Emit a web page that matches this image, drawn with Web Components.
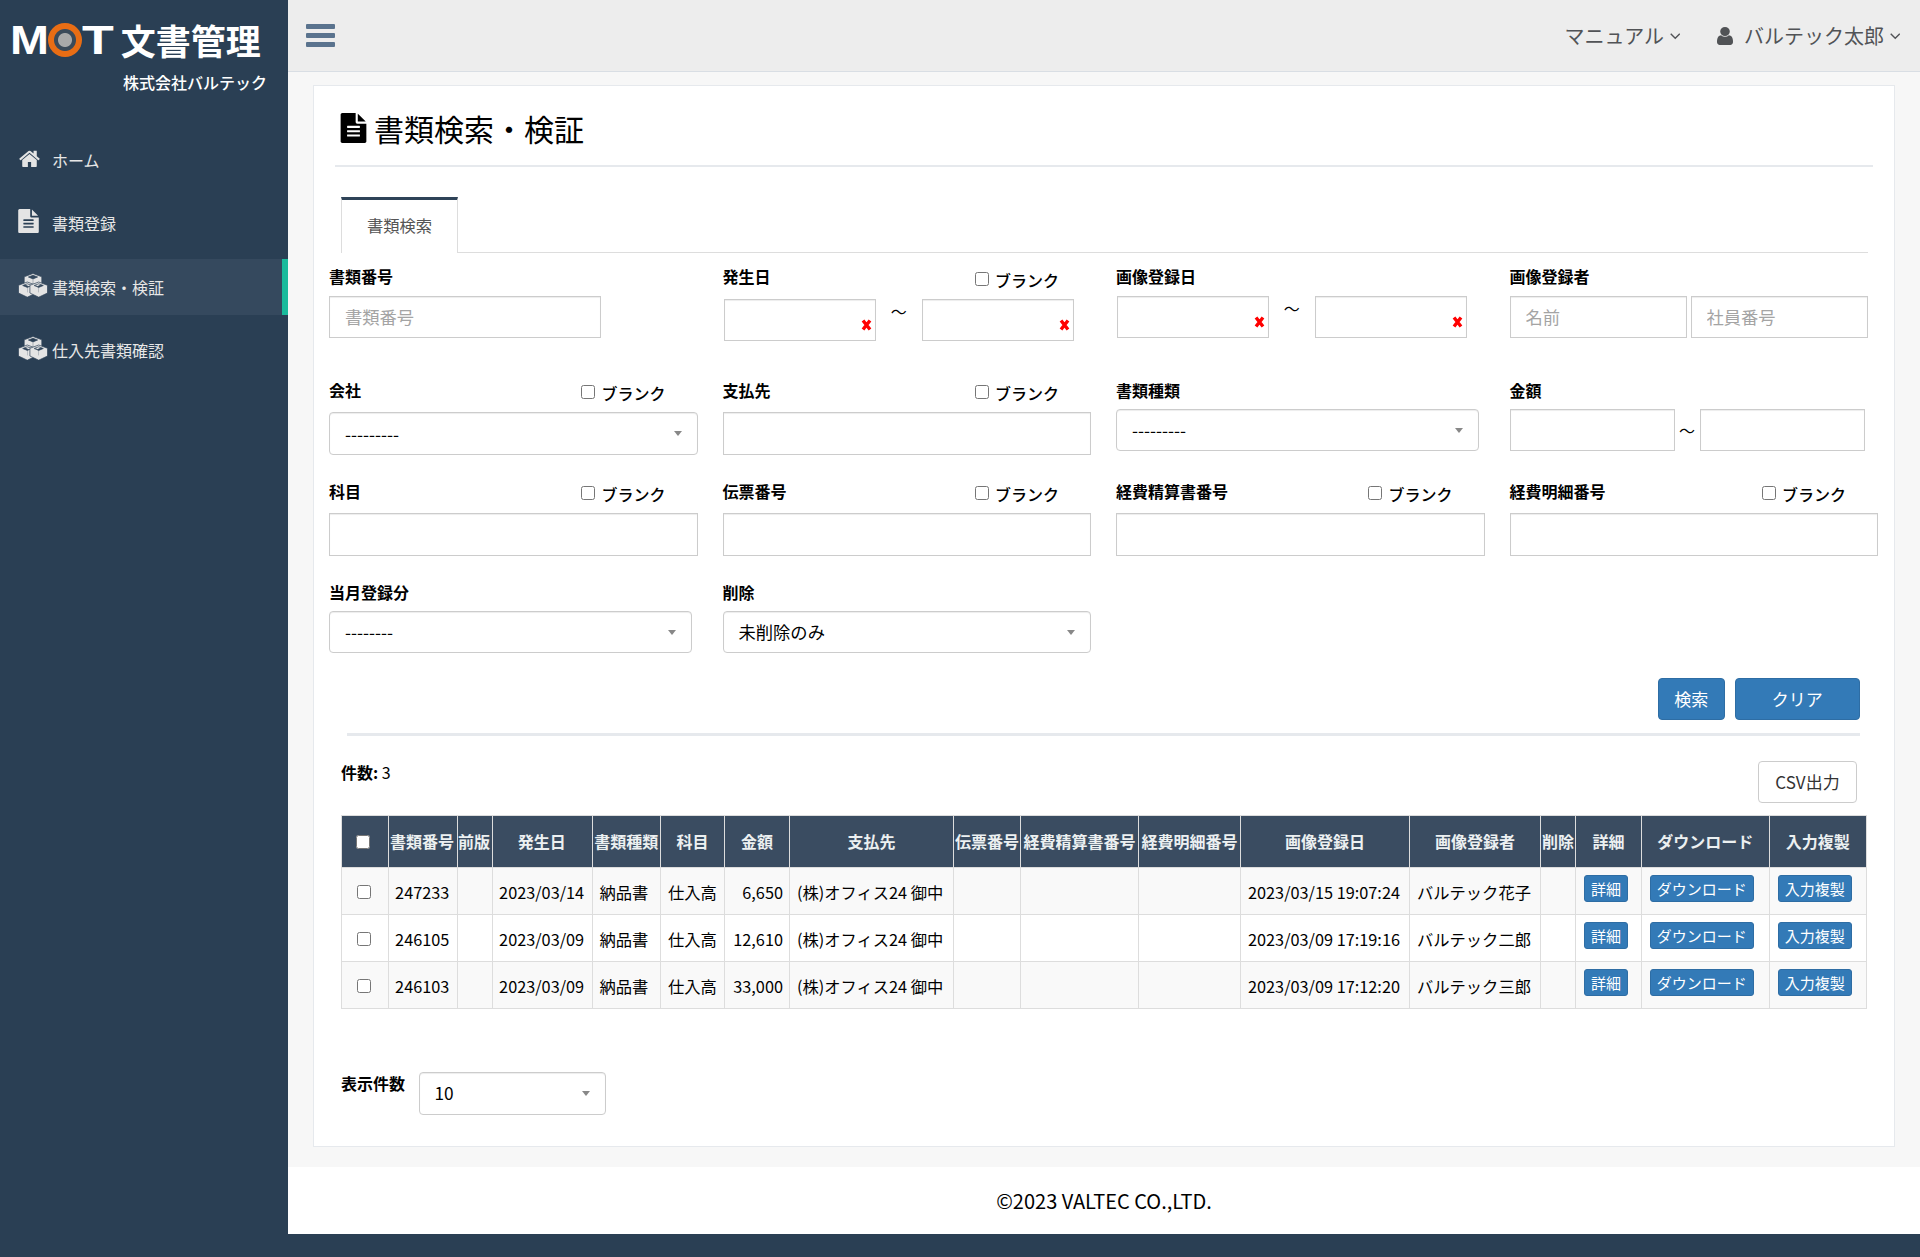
<!DOCTYPE html>
<html lang="ja"><head><meta charset="utf-8"><title>書類検索・検証</title>
<style>
html,body{margin:0;padding:0;height:1257px;overflow:hidden;background:#2a3f54;color:#000;font:400 16px/24px "Noto Sans CJK JP","Noto Sans",sans-serif}
.app{display:flex;width:1920px;height:1257px}
.col{width:1632px;display:flex;flex-direction:column}
</style></head><body>
<div class="app">
  <mot-sidebar>
    <nav-item icon="home">ホーム</nav-item>
    <nav-item icon="file">書類登録</nav-item>
    <nav-item icon="cubes" active>書類検索・検証</nav-item>
    <nav-item icon="cubes">仕入先書類確認</nav-item>
  </mot-sidebar>
  <div class="col">
    <mot-topbar></mot-topbar>
    <main-area>
      <page-card>
        <page-title slot="title">書類検索・検証</page-title>
        <tab-bar slot="tabs">書類検索</tab-bar>
        <form-grid slot="form">
          <x-field label="書類番号" style="--gap:7px"><x-input placeholder="書類番号" style="width:272px"></x-input></x-field>
          <x-field label="発生日" blank style="--gap:10px;--b:3px"><x-range style="--tw:45.5px;--ml:1.5px;--al:flex-start"><x-date></x-date><span>～</span><x-date></x-date></x-range></x-field>
          <x-field label="画像登録日" style="--gap:7px"><x-range style="--tw:45.5px;--ml:1px;--al:flex-start"><x-date></x-date><span>～</span><x-date></x-date></x-range></x-field>
          <x-field label="画像登録者" style="--gap:7px"><x-range style="--tw:4px;--w:358px"><x-input placeholder="名前"></x-input><span></span><x-input placeholder="社員番号"></x-input></x-range></x-field>

          <x-field label="会社" blank style="--gap:8px;--lt:-2.5px;--b:1px;--h:43px"><x-select value="---------"></x-select></x-field>
          <x-field label="支払先" blank style="--gap:8px;--lt:-2.5px;--b:1px;--h:43px"><x-input></x-input></x-field>
          <x-field label="書類種類" style="--gap:5px;--lt:-2.5px"><x-select value="---------" style="width:363px"></x-select></x-field>
          <x-field label="金額" style="--gap:5px;--lt:-2.5px"><x-range style="--tw:25px;--w:355px"><x-input></x-input><span>～</span><x-input></x-input></x-range></x-field>

          <x-field label="科目" blank style="--gap:9px;--h:43px"><x-input></x-input></x-field>
          <x-field label="伝票番号" blank style="--gap:9px;--h:43px"><x-input></x-input></x-field>
          <x-field label="経費精算書番号" blank style="--gap:9px;--h:43px"><x-input></x-input></x-field>
          <x-field label="経費明細番号" blank style="--gap:9px;--h:43px"><x-input></x-input></x-field>

          <x-field label="当月登録分" style="--gap:6px"><x-select value="--------" style="width:362.5px"></x-select></x-field>
          <x-field label="削除" style="--gap:6px"><x-select value="未削除のみ"></x-select></x-field>
        </form-grid>
        <action-bar slot="actions"><x-btn kind="primary" style="width:67px">検索</x-btn><x-btn kind="primary" style="width:125px">クリア</x-btn></action-bar>
        <result-head slot="head"><b>件数:</b> 3<x-btn slot="end" kind="default" style="width:99px">CSV出力</x-btn></result-head>
        <result-table slot="table"></result-table>
        <page-size slot="size"></page-size>
      </page-card>
    </main-area>
    <page-footer>©2023 VALTEC CO.,LTD.</page-footer>
  </div>
</div>
<script>
const cube=(x,y)=>`<path fill-rule="evenodd" stroke="#2f4359" stroke-width=".7" stroke-linejoin="round" d="M${x} ${y}l8.800 3.300v7.700l-8.800 4.200-8.800-4.200v-7.700zM${x-4.600} ${y+3.500}l4.600 1.900 4.600-1.900-4.600-1.700z"/><path d="M${x} ${y+5.600}v4.800" stroke="#2f4359" stroke-width=".5" opacity=".6"/>`;
const ICONS={
 home:'<svg width="21" height="18" viewBox="0 128 1664 1408" fill="currentColor" style="margin-left:1px"><path d="M1408 992v480q0 26-19 45t-45 19h-384v-384h-256v384h-384q-26 0-45-19t-19-45v-480q0-1 .5-3t.5-3l575-474 575 474q1 2 1 6zm223-69l-62 74q-8 9-21 11h-3q-13 0-21-7l-692-577-692 577q-12 8-24 7-13-2-21-11l-62-74q-8-10-7-23.500t11-21.500l719-599q32-26 76-26t76 26l244 204v-195q0-14 9-23t23-9h192q14 0 23 9t9 23v408l219 182q10 8 11 21.500t-7 23.500z"/></svg>',
 file:'<svg width="21" height="24" viewBox="128 0 1536 1792" fill="currentColor"><path d="M1596 476q14 14 28 36h-472v-472q22 14 36 28zm-476 164h544v1056q0 40-28 68t-68 28h-1344q-40 0-68-28t-28-68v-1600q0-40 28-68t68-28h800v544q0 40 28 68t68 28zm160 736v-64q0-14-9-23t-23-9h-704q-14 0-23 9t-9 23v64q0 14 9 23t23 9h704q14 0 23-9t9-23zm0-256v-64q0-14-9-23t-23-9h-704q-14 0-23 9t-9 23v64q0 14 9 23t23 9h704q14 0 23-9t9-23zm0-256v-64q0-14-9-23t-23-9h-704q-14 0-23 9t-9 23v64q0 14 9 23t23 9h704q14 0 23-9t9-23z"/></svg>',
 cubes:`<svg width="30" height="24" viewBox="0 0 30 24" fill="currentColor">${cube(15,.5)}${cube(9.300,9)}${cube(20.700,9)}</svg>`,
 user:'<svg width="16" height="18" viewBox="256 128 1280 1536" preserveAspectRatio="none" fill="currentColor"><path d="M1536 1399q0 109-62.500 187t-150.500 78h-854q-88 0-150.500-78t-62.500-187q0-85 8.500-160.500t31.500-152 58.500-131 94-89 134.500-34.500q131 128 313 128t313-128q76 0 134.500 34.500t94 89 58.500 131 31.500 152 8.500 160.500zm-256-887q0 159-112.500 271.500t-271.500 112.500-271.500-112.500-112.500-271.500 112.500-271.500 271.500-112.500 271.500 112.500 112.500 271.500z"/></svg>',
 chev:'<svg width="10.500" height="6.500" viewBox="0 0 10 6" fill="none" stroke="currentColor" stroke-width="1.300"><path d="M.7.7 5 5l4.300-4.300"/></svg>'
};
function def(name,fn){
  customElements.define(name,class extends HTMLElement{
    connectedCallback(){if(this.shadowRoot)return;this.attachShadow({mode:'open'}).innerHTML=fn(this);}
  });
}
def('mot-sidebar',()=>`<style>
:host{display:block;flex:none;width:288px;height:1257px;background:#2a3f54;color:#fff}
.logo{display:flex;align-items:center;height:44px;padding:18px 0 0 10px;color:#fff;font-weight:700;white-space:nowrap}
.lat{font:700 40px/44px "Liberation Sans",sans-serif;display:inline-block;flex:none}
.m{width:38.300px;transform:scaleX(1.170);transform-origin:left}
.o{width:34px;height:34px;border-radius:50%;color:transparent;font-size:1px;line-height:34px;text-align:center;background:radial-gradient(circle,#a9a9a9 0 6.500px,#3b4a59 7.500px 10.500px,#e96d14 11.500px 17px)}
.t{width:31px;transform:scaleX(1.300);transform-origin:left}
.j{font-size:35px;line-height:44px;margin-left:7.500px}
.co{margin:8px 0 0 123px;font-weight:500;line-height:24px;font-size:16px}
nav{margin-top:38px;display:flex;flex-direction:column;gap:7.600px}
</style>
<div class="logo"><span class="lat m">M</span><span class="lat o">O</span><span class="lat t">T</span><span class="j">文書管理</span></div>
<div class="co">株式会社バルテック</div>
<nav><slot></slot></nav>`);
def('nav-item',h=>`<style>
:host{display:flex;align-items:center;height:56px;padding-left:18px;color:#e7e7e7;box-sizing:border-box;font-size:16px}
:host([active]){background:#35495e;border-right:6px solid #1abb9c}
.i{width:34px;flex:none;display:flex;align-items:center;color:#e4e4e4;margin-top:-5px}
.t{margin-top:-1px}
</style><span class="i">${ICONS[h.getAttribute('icon')]}</span><span class="t"><slot></slot></span>`);
def('mot-topbar',()=>`<style>
:host{display:flex;align-items:center;flex:none;height:71px;box-sizing:content-box;background:#ededed;border-bottom:1px solid #d9dee4;padding:0 20px 0 17.700px;color:#515356;font-size:20px}
.b{display:flex;flex-direction:column;gap:4.300px;margin:0 auto 0 0}
.b i{display:block;width:29px;height:5px;background:#5a738e;border-radius:1px}
a{display:flex;align-items:center;gap:5.500px}
.c{display:flex;margin-top:2px}
.u{display:flex;margin:0 6px 0 36.500px}
</style><div class="b"><i></i><i></i><i></i></div>
<a>マニュアル<span class="c">${ICONS.chev}</span></a>
<a><span class="u">${ICONS.user}</span>バルテック太郎<span class="c">${ICONS.chev}</span></a>`);
def('main-area',()=>`<style>:host{display:block;flex:none;height:1095px;background:#f7f7f7;padding:13px 0 0 25px;box-sizing:border-box}</style><slot></slot>`);
def('page-card',()=>`<style>
:host{display:flex;flex-direction:column;width:1581.500px;height:1062px;box-sizing:border-box;background:#fff;border:1px solid #e6e9ed}
</style><slot name="title"></slot><slot name="tabs"></slot><slot name="form"></slot><slot name="actions"></slot><slot name="head"></slot><slot name="table"></slot><slot name="size"></slot>`);
def('page-title',()=>`<style>
:host{display:flex;align-items:center;box-sizing:border-box;height:81px;margin:0 21px 0 21px;padding:5px 0 0 5px;border-bottom:2px solid #e6e9ed;font-size:30px;line-height:40px;gap:7px;color:#000}
svg{display:block}
</style><svg width="27" height="30" viewBox="128 0 1536 1792" fill="currentColor"><path d="M1596 476q14 14 28 36h-472v-472q22 14 36 28zm-476 164h544v1056q0 40-28 68t-68 28h-1344q-40 0-68-28t-28-68v-1600q0-40 28-68t68-28h800v544q0 40 28 68t68 28zm160 736v-64q0-14-9-23t-23-9h-704q-14 0-23 9t-9 23v64q0 14 9 23t23 9h704q14 0 23-9t9-23zm0-256v-64q0-14-9-23t-23-9h-704q-14 0-23 9t-9 23v64q0 14 9 23t23 9h704q14 0 23-9t9-23zm0-256v-64q0-14-9-23t-23-9h-704q-14 0-23 9t-9 23v64q0 14 9 23t23 9h704q14 0 23-9t9-23z"/></svg><slot></slot>`);
def('tab-bar',()=>`<style>
:host{display:block;margin:30px 26px 0 27px;height:56px;border-bottom:1px solid #ddd;box-sizing:border-box}
div{width:117px;height:56px;box-sizing:border-box;border:1px solid #ddd;border-top:3px solid #2f4358;border-bottom:0;background:#fff;display:flex;align-items:center;justify-content:center;color:#555;font-size:16.300px;padding-bottom:3px}
</style><div><slot></slot></div>`);
def('form-grid',()=>`<style>
:host{display:grid;margin:12px 0 0 15px;grid-template-columns:repeat(4,368.500px);column-gap:25px;grid-template-rows:115px 100px 101px 71px}
</style><slot></slot>`);
def('x-field',h=>`<style>
:host{display:block}
.h{display:flex;height:24px;margin-bottom:var(--gap,7px)}
b{font-weight:700;margin-top:var(--lt,-1.500px)}
label{margin-left:auto;margin-right:32px;display:flex;align-items:center;gap:6px;height:24px;padding-top:var(--b,2px);font-weight:500}
input{margin:-3px 0 0;width:14px;height:14px}
</style><div class="h"><b>${h.getAttribute('label')}</b>${h.hasAttribute('blank')?'<label><input type="checkbox">ブランク</label>':''}</div><slot></slot>`);
def('x-input',h=>`<style>
:host{display:block;height:var(--h,42px)}
input{display:block;width:100%;height:100%;box-sizing:border-box;margin:0;padding:0 15px 2px;border:1px solid #ccc;border-radius:0;box-shadow:inset 0 1px 1px rgba(0,0,0,.075);font:inherit;font-size:17.300px;outline:0;background:#fff;color:#000}
input::placeholder{color:#a4a4a4;opacity:1}
</style><input type="text" placeholder="${h.getAttribute('placeholder')||''}">`);
def('x-date',()=>`<style>
:host{display:block;position:relative;width:152px;height:42px;box-sizing:border-box;border:1px solid #ccc;box-shadow:inset 0 1px 1px rgba(0,0,0,.075);background:#fff}
svg{position:absolute;right:3px;top:19px}
</style><svg width="11" height="12" viewBox="0 0 11 12"><path d="M2 1.500 9 10.500M9 1.500 2 10.500" stroke="#f00" stroke-width="3.400" fill="none"/></svg>`);
def('x-range',()=>`<style>
:host{display:flex;margin-left:var(--ml,0);width:var(--w,auto)}
::slotted(x-input){flex:1 1 0;min-width:0}
::slotted(x-date){flex:none}
::slotted(span){flex:none;width:var(--tw);text-align:center;align-self:var(--al,center);line-height:24px;font-size:16px}
</style><slot></slot>`);
def('x-select',h=>`<style>
:host{display:flex;align-items:center;height:var(--h,42px);box-sizing:border-box;border:1px solid #ccc;border-radius:4px;box-shadow:inset 0 1px 1px rgba(0,0,0,.075);background:#fff;padding:0 15px;position:relative;justify-content:space-between;font-size:17.300px}
s{width:0;height:0;border:4.500px solid transparent;border-top:5.500px solid #888;border-bottom:0;flex:none}
</style><span>${h.getAttribute('value')}</span><s></s>`);
def('x-btn',h=>{const p=h.getAttribute('kind')==='primary';return `<style>
:host{display:flex;align-items:center;justify-content:center;height:42px;box-sizing:border-box;border-radius:4px;border:1px solid ${p?'#2e6da4':'#ccc'};background:${p?'#337ab7':'#fff'};color:${p?'#fff':'#333'};font-size:17px}
</style><slot></slot>`});
def('action-bar',()=>`<style>
:host{display:flex;justify-content:flex-end;gap:10px;margin:26px 33.700px 0 0;padding-bottom:13px;box-sizing:content-box;position:relative}
</style><slot></slot>`);
def('result-head',()=>`<style>
:host{display:flex;justify-content:space-between;align-items:flex-start;margin:0 36.500px 0 27px;padding-top:28px;position:relative}
hr{position:absolute;left:6px;right:-2.800px;top:0;height:3px;margin:0;border:0;background:#e6e9ed}
span{margin-top:-1.500px}
</style><hr><span><slot></slot></span><slot name="end"></slot>`);
const COLS=[46.6,69,35,100.4,68.5,64,65,164,67,118,102,169,131,35,65.8,128,97];
const HEAD=['','書類番号','前版','発生日','書類種類','科目','金額','支払先','伝票番号','経費精算書番号','経費明細番号','画像登録日','画像登録者','削除','詳細','ダウンロード','入力複製'];
const ROWS=[['247233','2023/03/14','6,650','2023/03/15 19:07:24','バルテック花子'],['246105','2023/03/09','12,610','2023/03/09 17:19:16','バルテック二郎'],['246103','2023/03/09','33,000','2023/03/09 17:12:20','バルテック三郎']];
def('result-table',()=>`<style>
:host{display:block;margin:12px 0 0 27px;width:1525.400px}
table{border-collapse:collapse;table-layout:fixed;width:1525.400px;font-size:16.300px;line-height:24px}
th,td{border:1px solid #ddd;white-space:nowrap;overflow:visible}
thead tr{height:52px;background:#3a4c61;color:#ecf0f1}
th{font-weight:700;font-size:16px;padding:0 1px 2px 0;text-align:center}
tbody tr{height:47px}
tbody tr:nth-child(odd){background:#f9f9f9}
tbody tr:nth-child(even){background:#fff}
td{padding:2px 6.500px 0}
td.r{text-align:right}
td.c{padding:0 2px 0 0;text-align:center}
th:first-child{padding:0 3px 0 0}
td.b{vertical-align:top;padding:7px 0 0 7.500px}
input{margin:0;width:14px;height:14px;vertical-align:middle;position:relative;top:-2px}
button{display:block;height:27px;padding:0 6px;margin:0;box-sizing:border-box;background:#337ab7;border:1px solid #2e6da4;border-radius:3px;color:#fff;font:inherit;font-size:15px;line-height:24px;white-space:nowrap}
</style><table><colgroup>${COLS.map(w=>`<col style="width:${w}px">`).join('')}</colgroup>
<thead><tr>${HEAD.map((t,i)=>`<th>${i?t:'<input type="checkbox">'}</th>`).join('')}</tr></thead>
<tbody>${ROWS.map(r=>`<tr><td class="c"><input type="checkbox"></td><td>${r[0]}</td><td></td><td>${r[1]}</td><td>納品書</td><td>仕入高</td><td class="r">${r[2]}</td><td>(株)オフィス24 御中</td><td></td><td></td><td></td><td>${r[3]}</td><td>${r[4]}</td><td></td><td class="b"><button>詳細</button></td><td class="b"><button>ダウンロード</button></td><td class="b"><button>入力複製</button></td></tr>`).join('')}</tbody></table>`);
def('page-size',()=>`<style>
:host{display:flex;align-items:flex-start;gap:13.500px;margin:63px 0 0 27px}
b{font-weight:700;margin-top:-1px}
x-select{width:187px;height:42.700px}
</style><b>表示件数</b><x-select value="10"></x-select>`);
def('page-footer',()=>`<style>
:host{display:flex;align-items:center;justify-content:center;flex:none;height:67px;background:#fff;font-size:20px;color:#000}
</style><slot></slot>`);
</script>
</body></html>
